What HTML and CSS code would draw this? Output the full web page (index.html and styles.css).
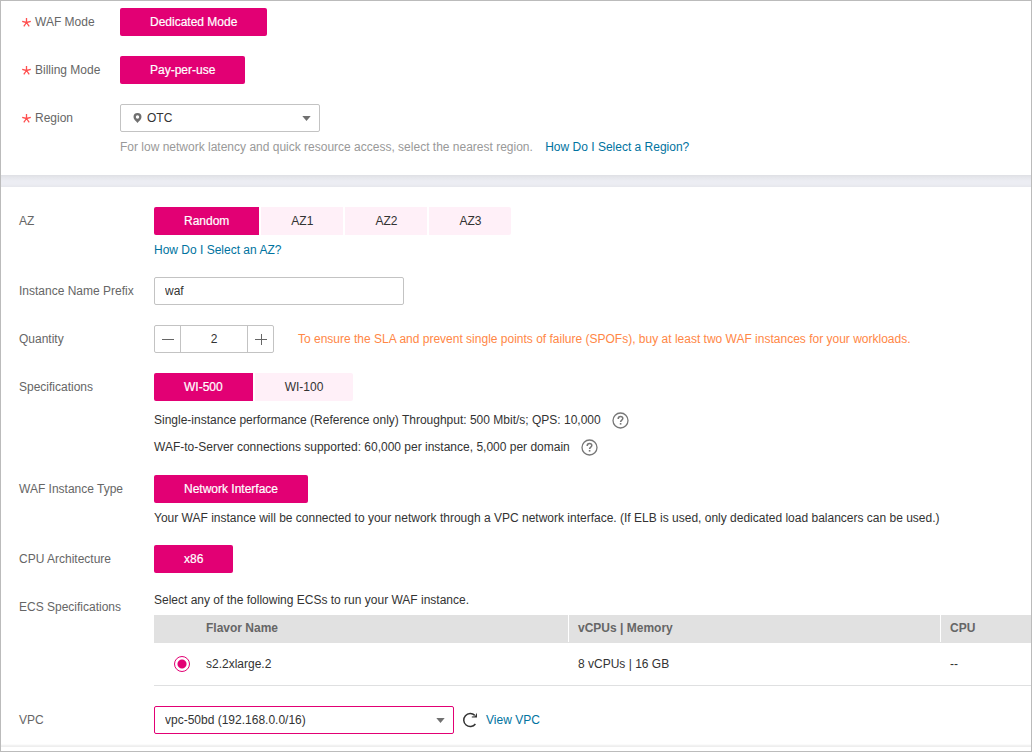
FILE: index.html
```html
<!DOCTYPE html>
<html lang="en">
<head>
<meta charset="utf-8">
<title>Buy WAF</title>
<link rel="stylesheet" href="styles.css">
</head>
<body>
<svg class="defs" aria-hidden="true">
  <symbol id="star" viewBox="0 0 9 9"><path d="M4.500 4.500V0M4.500 4.500L0.200 3.300M4.500 4.500L8.800 3.300M4.500 4.500L1.800 8.400M4.500 4.500L7.200 8.400" fill="none" stroke="currentColor" stroke-width="1.300"/></symbol>
  <symbol id="arrow" viewBox="0 0 9 5"><path d="M0.300 0H8.700L4.500 5Z" fill="currentColor"/></symbol>
  <symbol id="help" viewBox="0 0 17 17"><circle cx="8.500" cy="8.500" r="7.500" fill="none" stroke="currentColor" stroke-width="1.300"/><path d="M6.200 6.900C6.200 5.400 7.200 4.600 8.500 4.600S10.800 5.400 10.800 6.600C10.800 8.100 8.600 8.200 8.600 10" fill="none" stroke="currentColor" stroke-width="1.500"/><path d="M7.800 11h1.600v1.600h-1.600z" fill="currentColor"/></symbol>
</svg>
<main class="page">
  <section class="panel basics">
    <div class="row">
      <span class="label"><svg class="star"><use href="#star"/></svg>WAF Mode</span>
      <div class="field"><div class="choices"><button type="button" class="choice on">Dedicated Mode</button></div></div>
    </div>
    <div class="row">
      <span class="label"><svg class="star"><use href="#star"/></svg>Billing Mode</span>
      <div class="field"><div class="choices"><button type="button" class="choice on">Pay-per-use</button></div></div>
    </div>
    <div class="row">
      <label class="label" for="region"><svg class="star"><use href="#star"/></svg>Region</label>
      <div class="field">
        <div class="select region">
          <svg class="pin" viewBox="0 0 8 10"><path d="M4 0a4 4 0 0 1 4 4C8 6.500 5.500 8 4 10 2.500 8 0 6.500 0 4a4 4 0 0 1 4-4zM4 2.300a1.700 1.700 0 1 0 0 3.400 1.700 1.700 0 0 0 0-3.400z" fill="currentColor" fill-rule="evenodd"/></svg>
          <select id="region"><option>OTC</option></select>
          <svg class="arrow"><use href="#arrow"/></svg>
        </div>
        <p class="hint muted">For low network latency and quick resource access, select the nearest region. <a class="after" href="#">How Do I Select a Region?</a></p>
      </div>
    </div>
  </section>

  <section class="panel details">
    <div class="row">
      <span class="label">AZ</span>
      <div class="field">
        <div class="choices"><button type="button" class="choice on">Random</button><button type="button" class="choice">AZ1</button><button type="button" class="choice">AZ2</button><button type="button" class="choice">AZ3</button></div>
        <p class="hint"><a href="#">How Do I Select an AZ?</a></p>
      </div>
    </div>
    <div class="row">
      <label class="label" for="prefix">Instance Name Prefix</label>
      <div class="field"><input class="text" id="prefix" type="text" value="waf"></div>
    </div>
    <div class="row">
      <label class="label" for="quantity">Quantity</label>
      <div class="field inline">
        <div class="stepper">
          <button type="button" aria-label="Decrease"><svg viewBox="0 0 12 12"><path d="M0 6.500H12" stroke="currentColor"/></svg></button>
          <input id="quantity" type="text" value="2">
          <button type="button" aria-label="Increase"><svg viewBox="0 0 12 12"><path d="M0 6.500H12M6.500 1V12" stroke="currentColor"/></svg></button>
        </div>
        <span class="warning">To ensure the SLA and prevent single points of failure (SPOFs), buy at least two WAF instances for your workloads.</span>
      </div>
    </div>
    <div class="row">
      <span class="label">Specifications</span>
      <div class="field">
        <div class="choices"><button type="button" class="choice on">WI-500</button><button type="button" class="choice">WI-100</button></div>
        <p class="fact">Single-instance performance (Reference only) Throughput: 500 Mbit/s; QPS: 10,000<svg class="help"><use href="#help"/></svg></p>
        <p class="fact">WAF-to-Server connections supported: 60,000 per instance, 5,000 per domain<svg class="help"><use href="#help"/></svg></p>
      </div>
    </div>
    <div class="row">
      <span class="label">WAF Instance Type</span>
      <div class="field">
        <div class="choices"><button type="button" class="choice on">Network Interface</button></div>
        <p class="hint">Your WAF instance will be connected to your network through a VPC network interface. (If ELB is used, only dedicated load balancers can be used.)</p>
      </div>
    </div>
    <div class="row">
      <span class="label">CPU Architecture</span>
      <div class="field"><div class="choices"><button type="button" class="choice on">x86</button></div></div>
    </div>
    <div class="row">
      <span class="label">ECS Specifications</span>
      <div class="field">
        <p class="intro">Select any of the following ECSs to run your WAF instance.</p>
        <table class="flavors">
          <colgroup><col class="pick"><col class="wide"><col class="wide"><col></colgroup>
          <thead><tr><th></th><th>Flavor Name</th><th class="split">vCPUs | Memory</th><th class="split">CPU</th></tr></thead>
          <tbody><tr><td class="radio-cell"><input type="radio" id="flavor" name="flavor" checked></td><td><label for="flavor">s2.2xlarge.2</label></td><td>8 vCPUs | 16 GB</td><td>--</td></tr></tbody>
        </table>
      </div>
    </div>
    <div class="row">
      <label class="label" for="vpc">VPC</label>
      <div class="field inline">
        <div class="select vpc">
          <select id="vpc"><option>vpc-50bd (192.168.0.0/16)</option></select>
          <svg class="arrow"><use href="#arrow"/></svg>
        </div>
        <button type="button" class="refresh" aria-label="Refresh"><svg viewBox="0 0 16 16"><path d="M12.800 3.400A6.500 6.500 0 1 0 13.400 12" fill="none" stroke="currentColor" stroke-width="1.500"/><path d="M15 0.800V5.600H9.800V4.500L13 4.200Z" fill="currentColor"/></svg></button>
        <a href="#">View VPC</a>
      </div>
    </div>
  </section>
</main>
</body>
</html>
```
FILE: styles.css
```css
* { box-sizing: border-box; }

body {
  margin: 0;
  font: 12px/14px "Liberation Sans", Arial, sans-serif;
  color: #333;
  background: #fff;
}

button, input, select { font: inherit; color: inherit; }
p { margin: 0; }
a { color: #0073a0; text-decoration: none; }
svg { display: block; flex: none; }
.defs { position: absolute; width: 0; height: 0; }

.page {
  min-height: 100vh;
  border: 1px solid #bbb;
}

.panel {
  display: flex;
  flex-direction: column;
  gap: 20px;
}

.basics { padding: 7px 20px 21px 21px; }

.details {
  padding: 32px 0 12px 18px;
  border-bottom: 1px solid #eee;
  background: linear-gradient(#dfe0e5, #e7e8ed 3px, #ecedf3 6px, #ecedf3 9px, #e6e7ec 12px, #fff 12px);
  box-shadow: inset 0 -3px 2px -2px #eee;
}

.row { display: flex; align-items: flex-start; }

.label {
  display: flex;
  align-items: center;
  flex: none;
  width: 135px;
  height: 28px;
  color: #666;
}

.basics .label { width: 98px; }
.star { width: 9px; height: 9px; margin: 1px 4px 0 0; color: #ff5050; }

.field { flex: 1; min-width: 0; }
.inline { display: flex; align-items: center; }

.choices { display: flex; gap: 2px; }

.choice {
  height: 28px;
  padding: 0 30px;
  border: 0;
  background: #fff0f8;
}

.choice:first-child { border-radius: 2px 0 0 2px; }
.choice:last-child { border-radius: 0 2px 2px 0; }
.choice:only-child { border-radius: 2px; }
.choice.on { background: #e20074; color: #fff; -webkit-text-stroke: 0.2px #fff; }

.hint { margin-top: 8px; }
.muted { color: #999; }
.after { margin-left: 9px; }

.fact { display: flex; align-items: center; height: 16px; margin-top: 11px; }
.help { width: 17px; height: 17px; margin-left: 11px; color: #777; }

.select { position: relative; display: flex; height: 28px; }
.region { width: 200px; }
.vpc { width: 300px; }

.select select {
  width: 100%;
  padding: 0 24px 0 10px;
  border: 1px solid #c3c3c3;
  border-radius: 2px;
  background: #fff;
  appearance: none;
}

.region select { padding-left: 26px; }
.vpc select { border-color: #e20074; }
.arrow { position: absolute; top: 12px; right: 9px; width: 9px; height: 5px; color: #707070; pointer-events: none; }
.pin { position: absolute; top: 9px; left: 13px; width: 9px; height: 10px; color: #707070; }

.text {
  display: block;
  width: 250px;
  height: 28px;
  padding: 0 10px;
  border: 1px solid #c3c3c3;
  border-radius: 2px;
}

.stepper {
  display: flex;
  width: 120px;
  height: 28px;
  border: 1px solid #c3c3c3;
  border-radius: 2px;
}

.stepper button {
  display: flex;
  align-items: center;
  justify-content: center;
  flex: none;
  width: 25px;
  padding: 0;
  border: 0;
  background: none;
  color: #666;
}

.stepper svg { width: 12px; height: 12px; }

.stepper input {
  flex: 1;
  min-width: 0;
  padding: 0;
  border: solid #c3c3c3;
  border-width: 0 1px;
  text-align: center;
}

.warning { margin-left: 24px; color: #ff8746; }

.intro { margin-bottom: 8px; }

.flavors {
  width: 100%;
  table-layout: fixed;
  border-spacing: 0;
}

.pick { width: 42px; }
.wide { width: 372px; }

.flavors th {
  height: 28px;
  padding: 0 10px 2px;
  background: #e1e1e1;
  color: #666;
  text-align: left;
}

.flavors .split {
  background: linear-gradient(#fff, #fff) 0 0 / 1px 27px no-repeat #e1e1e1;
}

.flavors td {
  height: 43px;
  padding: 0 10px;
  border-bottom: 1px solid #dfe0e1;
}

.flavors .radio-cell { padding: 0 6px 0 20px; }

input[type="radio"] {
  display: block;
  width: 16px;
  height: 16px;
  margin: 0;
  border: 1px solid #e20074;
  border-radius: 50%;
  background: radial-gradient(circle, #e20074 4px, #fff 5px);
  appearance: none;
}

.refresh {
  width: 16px;
  height: 16px;
  margin: 0 8px;
  padding: 0;
  border: 0;
  background: none;
}
```
